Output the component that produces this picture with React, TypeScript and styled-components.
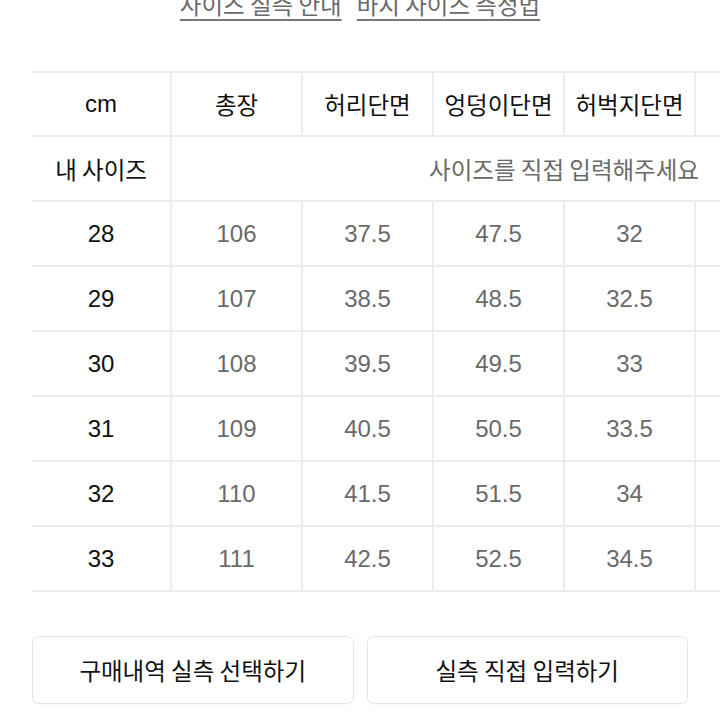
import React from "react";
import styled, { createGlobalStyle } from "styled-components";

const Global = createGlobalStyle`
  html, body { margin: 0; padding: 0; background: #fff; }
  body { overflow: hidden; font-family: "Liberation Sans", "Noto Sans CJK KR", sans-serif; }
`;

const Page = styled.div`
  width: 720px;
  height: 720px;
  overflow: hidden;
  display: flex;
  flex-direction: column;
`;

const LinkRow = styled.div`
  margin-top: -10px;
  display: flex;
  justify-content: center;
  gap: 15px;
  height: 28px;
`;

const GuideLink = styled.a`
  font-family: "Noto Sans CJK KR", sans-serif;
  font-size: 23.5px;
  line-height: 28px;
  color: #6a6a6a;
  text-decoration: underline;
  text-decoration-thickness: 2px;
  text-underline-offset: 5px;
  text-decoration-color: #777;
  cursor: pointer;
`;

const TableWrap = styled.div`
  margin-top: 53px;
  padding-left: 32px;
  overflow: hidden;
`;

const Grid = styled.div`
  display: grid;
  grid-template-columns: 138px repeat(6, 131px);
  width: max-content;
`;

const Cell = styled.div<{ $head?: boolean; $label?: boolean; $span?: boolean; $kr?: boolean; $top?: boolean }>`
  box-sizing: border-box;
  height: ${(p) => (p.$top ? 66 : 65)}px;
  display: flex;
  align-items: center;
  justify-content: center;
  border-bottom: 2px solid #ececec;
  border-top: ${(p) => (p.$top ? "2px solid #ececec" : "none")};
  border-left: ${(p) => (p.$label ? "none" : "2px solid #ececec")};
  grid-column: ${(p) => (p.$span ? "2 / -1" : "auto")};
  font-family: ${(p) => (p.$kr ? '"Noto Sans CJK KR", sans-serif' : '"Liberation Sans", "Noto Sans CJK KR", sans-serif')};
  font-size: ${(p) => (p.$kr ? 23.5 : 24)}px;
  color: ${(p) => (p.$head || p.$label ? "#111" : "#6a6a6a")};
  white-space: nowrap;
`;

const ButtonRow = styled.div`
  margin-top: 44px;
  padding: 0 32px;
  display: grid;
  grid-template-columns: 1fr 1fr;
  gap: 13px;
`;

const ActionButton = styled.button`
  height: 68px;
  background: #fff;
  border: 1.5px solid #e6e6e6;
  border-radius: 7px;
  box-shadow: 0 1px 2px rgba(0, 0, 0, 0.04);
  font-family: "Noto Sans CJK KR", sans-serif;
  font-size: 23.5px;
  font-weight: 400;
  color: #111;
  cursor: pointer;
`;

const headers = ["총장", "허리단면", "엉덩이단면", "허벅지단면", "밑위"];
const rows = [
  ["28", "106", "37.5", "47.5", "32", "28"],
  ["29", "107", "38.5", "48.5", "32.5", "28.5"],
  ["30", "108", "39.5", "49.5", "33", "29"],
  ["31", "109", "40.5", "50.5", "33.5", "29.5"],
  ["32", "110", "41.5", "51.5", "34", "30"],
  ["33", "111", "42.5", "52.5", "34.5", "30.5"],
];

export default function App() {
  return (
    <Page>
      <Global />
      <LinkRow>
        <GuideLink>사이즈 실측 안내</GuideLink>
        <GuideLink>바지 사이즈 측정법</GuideLink>
      </LinkRow>
      <TableWrap>
        <Grid>
          <Cell $top $label $head>cm</Cell>
          {headers.map((h) => (
            <Cell key={h} $top $head $kr>{h}</Cell>
          ))}
          <Cell $top $head />
          <Cell $label $kr>내 사이즈</Cell>
          <Cell $span $kr>사이즈를 직접 입력해주세요</Cell>
          {rows.map((r) => (
            <React.Fragment key={r[0]}>
              <Cell $label>{r[0]}</Cell>
              {r.slice(1).map((v, i) => (
                <Cell key={i}>{v}</Cell>
              ))}
              <Cell />
            </React.Fragment>
          ))}
        </Grid>
      </TableWrap>
      <ButtonRow>
        <ActionButton>구매내역 실측 선택하기</ActionButton>
        <ActionButton>실측 직접 입력하기</ActionButton>
      </ButtonRow>
    </Page>
  );
}
